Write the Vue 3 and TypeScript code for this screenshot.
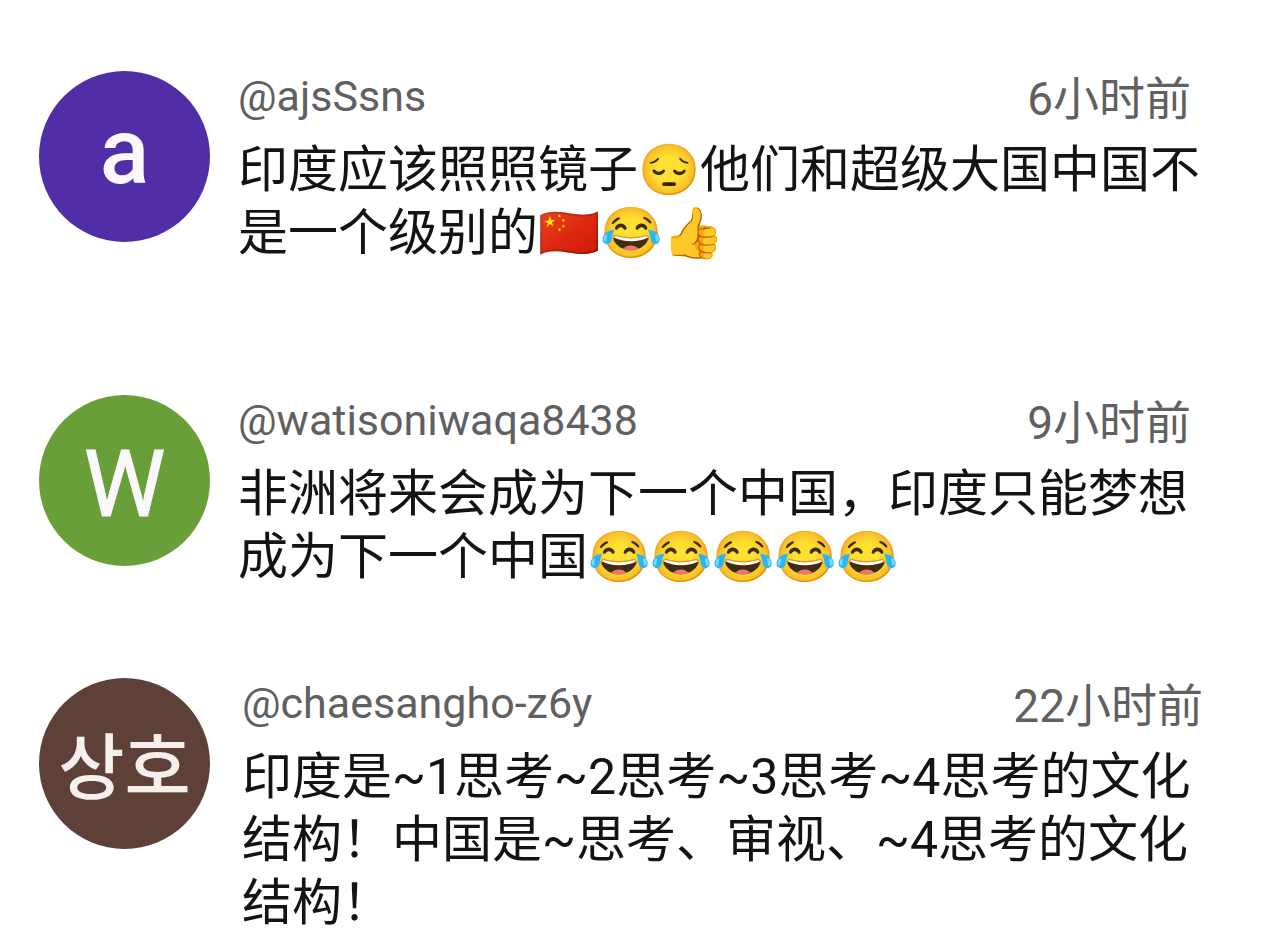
<script setup lang="ts">
interface Comment {
  id: number
  initial: string
  tone: string
  handle: string
  time: string
  lines: string[]
}

const comments: Comment[] = [
  { id: 1, initial: 'a', tone: 'purple', handle: '@ajsSsns', time: '6小时前', lines: ['印度应该照照镜子😔他们和超级大国中国不', '是一个级别的🇨🇳😂👍'] },
  { id: 2, initial: 'W', tone: 'green', handle: '@watisoniwaqa8438', time: '9小时前', lines: ['非洲将来会成为下一个中国，印度只能梦想', '成为下一个中国😂😂😂😂😂'] },
  { id: 3, initial: '상호', tone: 'brown', handle: '@chaesangho-z6y', time: '22小时前', lines: ['印度是~1思考~2思考~3思考~4思考的文化', '结构！中国是~思考、审视、~4思考的文化', '结构！'] },
]
</script>

<template>
  <main class="comments">
    <article v-for="c in comments" :key="c.id" class="comment" :class="c.tone">
      <div class="avatar">{{ c.initial }}</div>
      <div class="content">
        <header class="meta">
          <span class="handle">{{ c.handle }}</span>
          <time class="time">{{ c.time }}</time>
        </header>
        <p class="body">
          <span v-for="line in c.lines" :key="line" class="line">{{ line }}</span>
        </p>
      </div>
    </article>
  </main>
</template>

<style>
body { margin: 0; background: #fff; }
</style>

<style scoped>
.comments { padding: 71px 72px 0 39px; font-family: Roboto, "Noto Sans CJK SC", sans-serif; color: #131313; }
.comment { display: flex; gap: 28px; }
.green { margin-top: 130px; }
.brown { margin-top: 89px; gap: 32px; }
.avatar {
  box-sizing: border-box;
  width: 171px;
  height: 171px;
  border-radius: 50%;
  flex: none;
  display: flex;
  align-items: center;
  justify-content: center;
  color: #fbf8fc;
  font-size: 92px;
  font-weight: 500;
  line-height: 1;
}
.purple .avatar { background: #512da8; padding-bottom: 10px; }
.green .avatar { background: #689f38; padding-top: 8px; font-weight: 400; -webkit-text-stroke: 1px currentColor; }
.brown .avatar { background: #5d4037; color: #f5efed; font-family: "Noto Sans CJK KR", sans-serif; font-size: 72px; padding-bottom: 4px; }
.content { flex: 1; min-width: 0; }
.meta { display: flex; justify-content: space-between; color: #606060; height: 68px; padding-right: 12px; box-sizing: border-box; }
.brown .meta { padding-right: 0; }
.handle { font-size: 43px; line-height: 50px; }
.time { font-size: 46px; line-height: 56px; }
.body { margin: 0; font-size: 50px; line-height: 63px; }
.line { display: block; white-space: nowrap; }
</style>
